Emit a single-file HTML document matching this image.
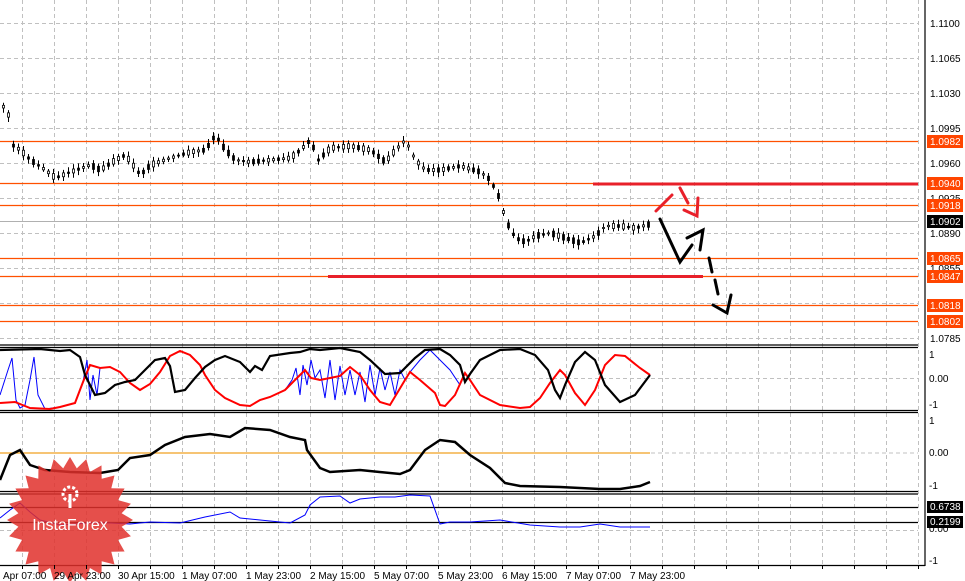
<!DOCTYPE html>
<html><head><meta charset="utf-8"><style>
html,body{margin:0;padding:0;background:#fff;}
svg{display:block;font-family:"Liberation Sans",sans-serif;}
</style></head><body>
<svg id="s" width="965" height="581" viewBox="0 0 965 581" xmlns="http://www.w3.org/2000/svg">
<rect width="965" height="581" fill="#fff"/>
<g id="grid" stroke="#c0c0c0" stroke-dasharray="4,3" stroke-width="1"></g>
<g stroke="#ff5000" stroke-width="1.3">
<line x1="0" y1="141.5" x2="918" y2="141.5"/>
<line x1="0" y1="183.5" x2="918" y2="183.5"/>
<line x1="0" y1="205.5" x2="918" y2="205.5"/>
<line x1="0" y1="258.5" x2="918" y2="258.5"/>
<line x1="0" y1="276.5" x2="918" y2="276.5"/>
<line x1="0" y1="305.5" x2="918" y2="305.5"/>
<line x1="0" y1="321.5" x2="918" y2="321.5"/>
</g>
<line x1="0" y1="221.5" x2="918" y2="221.5" stroke="#b0b0b0"/>
<line x1="593" y1="184" x2="918" y2="184" stroke="#e8202a" stroke-width="3"/>
<line x1="328" y1="276.5" x2="703" y2="276.5" stroke="#e8202a" stroke-width="3"/>
<g id="candles" stroke="#000" stroke-width="1"></g>
<g stroke="#000" stroke-width="3" fill="none" stroke-linecap="round">
<polyline points="660,219 680,262 692,245"/>
<polyline points="687,238 703,230 700,250"/>
<line x1="709" y1="258" x2="712" y2="272"/>
<line x1="715" y1="280" x2="718" y2="294"/>
<polyline points="713,305 727,313 731,295"/>
</g>
<g stroke="#e8202a" stroke-width="3" fill="none" stroke-linecap="round">
<line x1="656" y1="211" x2="672" y2="195"/>
<line x1="680" y1="188" x2="688" y2="203"/>
<polyline points="684,210 697,216 698,198"/>
</g>
<g stroke="#000" stroke-width="1.2" fill="none">
<line x1="0" y1="345" x2="918" y2="345"/>
<line x1="0" y1="347.5" x2="918" y2="347.5"/>
<line x1="0" y1="410.5" x2="918" y2="410.5"/>
<line x1="0" y1="412.5" x2="918" y2="412.5"/>
<line x1="0" y1="491.5" x2="918" y2="491.5"/>
<line x1="0" y1="494" x2="918" y2="494"/>
<line x1="0" y1="507.5" x2="918" y2="507.5"/>
<line x1="0" y1="522.5" x2="918" y2="522.5"/>
<line x1="0" y1="565.5" x2="925" y2="565.5"/>
<line x1="925" y1="0" x2="925" y2="566"/>
</g>
<line x1="0" y1="453" x2="650" y2="453" stroke="#f0a020" stroke-width="1.2"/>
<polyline fill="none" stroke="#0000ff" stroke-width="1" points="0,395 8,370 12,358 16,400 20,408 25,405 30,380 34,357 38,395 45,409 60,407 75,403 83,382 87,360 90,400 93,375 97,395 100,368 110,367 120,372 130,383 140,390 150,384 160,372 170,356 180,351 190,355 200,365 205,375 215,390 225,398 240,405 250,406 260,400 270,397 285,390 292,380 296,368 300,395 303,365 307,385 311,360 315,378 320,370 325,398 330,360 335,400 340,366 345,395 350,370 355,395 360,372 365,402 370,365 375,395 380,368 385,390 390,372 395,395 400,370 405,380 410,372 420,360 430,350 440,360 450,370 460,385 465,373 470,380 480,395 500,405 520,408 530,407 540,398 550,383 560,370 565,375 575,393 585,405 595,390 605,365 615,355 625,356 640,368 650,375"/>
<polyline fill="none" stroke="#ff0000" stroke-width="2" points="0,403 15,402 30,408 50,409 60,407 75,403 83,382 90,365 100,368 110,367 120,372 130,383 140,390 150,384 160,372 170,356 180,351 190,355 200,365 205,375 215,390 225,398 240,405 250,406 260,400 270,397 285,390 292,383 300,375 305,370 311,378 320,380 330,378 340,376 350,367 360,375 370,390 380,402 390,405 405,380 410,372 420,380 435,393 440,405 445,406 455,395 465,373 470,380 480,395 500,405 520,408 530,407 540,398 550,383 560,370 565,375 575,393 585,405 595,390 605,365 615,355 625,356 640,368 650,375"/>
<polyline fill="none" stroke="#000" stroke-width="2.2" points="0,350 40,349 60,351 70,350 80,357 85,375 95,395 105,393 115,385 125,382 135,380 145,370 155,360 165,358 170,366 175,392 185,390 195,378 205,367 215,360 225,356 240,362 250,372 255,366 262,370 270,356 290,353 300,352 310,349 320,350 340,348 360,352 370,360 385,374 400,373 415,358 425,350 440,349 450,355 460,365 465,382 470,374 480,360 500,350 520,349 535,355 548,370 555,390 560,398 565,385 575,362 585,352 595,360 605,385 620,402 635,395 650,375"/>
<polyline fill="none" stroke="#000" stroke-width="2.5" points="0,480 10,455 20,450 30,465 45,470 70,472 100,473 118,470 130,458 150,455 165,445 185,437 210,434 230,437 245,428 270,430 290,437 305,440 307,450 320,468 330,472 360,470 400,474 410,470 425,450 440,440 455,442 470,455 490,468 505,483 520,486 560,487 600,489 620,489 640,486 650,482"/>
<polyline fill="none" stroke="#0000ff" stroke-width="1" points="0,518 10,510 20,503 30,512 40,520 60,525 90,523 110,523 130,524 150,522 180,523 205,517 230,512 240,518 260,520 290,523 305,515 310,505 320,497 340,496 350,503 360,499 380,497 395,497 410,495 430,496 440,524 450,522 470,522 500,520 530,525 560,527 580,527 600,524 620,527 650,527"/>
<g opacity="0.85">
<polygon id="star" fill="#e0302c"/>
</g>
<g fill="#fff" stroke="#fff">
<circle cx="70" cy="494" r="7" fill="none" stroke-width="3" stroke-dasharray="3,2"/>
<line x1="70" y1="494" x2="70" y2="508" stroke-width="3"/>
</g>
<text x="70" y="530" fill="#fff" font-size="16" text-anchor="middle">InstaForex</text>
<g font-size="10" fill="#000">
<text x="930" y="27">1.1100</text>
<text x="930" y="62">1.1065</text>
<text x="930" y="97">1.1030</text>
<text x="930" y="132">1.0995</text>
<text x="930" y="167">1.0960</text>
<text x="930" y="202">1.0925</text>
<text x="930" y="237">1.0890</text>
<text x="930" y="272">1.0855</text>
<text x="930" y="342">1.0785</text>
</g>
<g font-size="10">
<rect x="927" y="135" width="36" height="13" fill="#ff4500"/><text x="930" y="145" fill="#fff">1.0982</text>
<rect x="927" y="177" width="36" height="13" fill="#ff4500"/><text x="930" y="187" fill="#fff">1.0940</text>
<rect x="927" y="199" width="36" height="13" fill="#ff4500"/><text x="930" y="209" fill="#fff">1.0918</text>
<rect x="927" y="215" width="36" height="13" fill="#000"/><text x="930" y="225" fill="#fff">1.0902</text>
<rect x="927" y="252" width="36" height="13" fill="#ff4500"/><text x="930" y="262" fill="#fff">1.0865</text>
<rect x="927" y="270" width="36" height="13" fill="#ff4500"/><text x="930" y="280" fill="#fff">1.0847</text>
<rect x="927" y="299" width="36" height="13" fill="#ff4500"/><text x="930" y="309" fill="#fff">1.0818</text>
<rect x="927" y="315" width="36" height="13" fill="#ff4500"/><text x="930" y="325" fill="#fff">1.0802</text>
<text x="929" y="358">1</text><text x="929" y="382">0.00</text><text x="929" y="408">-1</text>
<text x="929" y="424">1</text><text x="929" y="456">0.00</text><text x="929" y="489">-1</text>
<text x="929" y="532">0.00</text><text x="929" y="564">-1</text>
<rect x="927" y="501" width="36" height="12" fill="#000"/><text x="930" y="510" fill="#fff">0.6738</text>
<rect x="927" y="516" width="36" height="12" fill="#000"/><text x="930" y="525" fill="#fff">0.2199</text>
</g>
<g font-size="10" fill="#000">
<text x="3" y="579">Apr 07:00</text>
<text x="54" y="579">29 Apr 23:00</text>
<text x="118" y="579">30 Apr 15:00</text>
<text x="182" y="579">1 May 07:00</text>
<text x="246" y="579">1 May 23:00</text>
<text x="310" y="579">2 May 15:00</text>
<text x="374" y="579">5 May 07:00</text>
<text x="438" y="579">5 May 23:00</text>
<text x="502" y="579">6 May 15:00</text>
<text x="566" y="579">7 May 07:00</text>
<text x="630" y="579">7 May 23:00</text>
</g>
</svg>
<script>
var ns="http://www.w3.org/2000/svg";
var svg=document.getElementById('s');
var g=document.getElementById('grid');
function L(p,x1,y1,x2,y2){var l=document.createElementNS(ns,'line');l.setAttribute('x1',x1);l.setAttribute('y1',y1);l.setAttribute('x2',x2);l.setAttribute('y2',y2);p.appendChild(l);return l;}
for(var x=22.5;x<925;x+=32){L(g,x,0,x,565);var t=L(svg,x,565,x,569);t.setAttribute('stroke','#000');}
for(var y=23.5;y<345;y+=35)L(g,0,y,918,y);
[378.5,453,530.5].forEach(function(y){L(g,0,y,918,y);});
var pts=[[2,105],[8,115],[12,145],[20,150],[30,160],[45,170],[55,178],[70,172],[90,165],[100,170],[115,160],[125,155],[140,175],[150,165],[170,158],[190,152],[205,150],[215,135],[225,150],[235,160],[250,162],[270,160],[290,158],[300,150],[310,140],[318,160],[330,148],[350,146],[370,150],[385,162],[395,150],[405,140],[415,160],[425,170],[440,170],[460,166],[480,172],[490,180],[500,200],[505,220],[515,238],[525,242],[535,236],[550,233],[565,238],[580,243],[595,236],[605,226],[620,226],[635,228],[650,224]];
var c=document.getElementById('candles');
function yAt(x){for(var i=1;i<pts.length;i++){if(x<=pts[i][0]){var a=pts[i-1],b=pts[i];return a[1]+(b[1]-a[1])*(x-a[0])/(b[0]-a[0]);}}return pts[pts.length-1][1];}
var seed=3;function r(){seed=(seed*9301+49297)%233280;return seed/233280;}
for(var x=3;x<=650;x+=5){var y=yAt(x);var h=1+r()*5;L(c,x+.5,y-h/2-2-r()*3,x+.5,y+h/2+2+r()*3);var rc=document.createElementNS(ns,'rect');rc.setAttribute('x',x-0.5);rc.setAttribute('y',y-h/2);rc.setAttribute('width',2);rc.setAttribute('height',h);rc.setAttribute('fill',r()>.5?'#000':'#fff');rc.setAttribute('stroke','#000');rc.setAttribute('stroke-width','0.8');c.appendChild(rc);}
var s=[],n=24,cx=70,cy=520;for(var i=0;i<n*2;i++){var a=Math.PI*i/n,R=i%2?52:63;s.push((cx+R*Math.sin(a)).toFixed(1)+','+(cy-R*Math.cos(a)).toFixed(1));}
document.getElementById('star').setAttribute('points',s.join(' '));
</script>
</body></html>
